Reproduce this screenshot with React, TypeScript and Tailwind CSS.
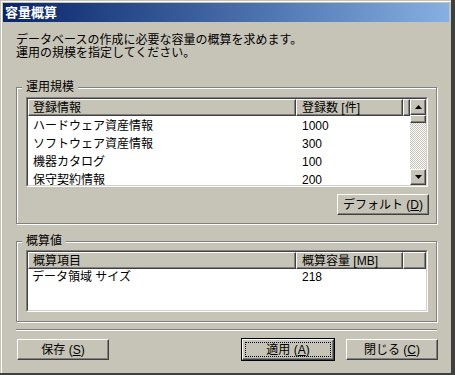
import React from "react";

const raised =
  "border border-t-white border-l-white border-r-[#404040] border-b-[#404040] shadow-[inset_-1px_-1px_0_#808080]";

function HeaderCell({ children, className }: { children?: React.ReactNode; className: string }) {
  return (
    <div className={`flex h-full shrink-0 items-center bg-[#c6c3b7] ${raised} ${className}`}>
      {children}
    </div>
  );
}

function Arrow({ up }: { up?: boolean }) {
  return (
    <svg width="7" height="4" viewBox="0 0 7 4">
      <polygon points={up ? "3.5,0 7,4 0,4" : "0,0 7,0 3.5,4"} fill="#000" />
    </svg>
  );
}

function Scrollbar() {
  return (
    <div className="flex w-[16px] shrink-0 flex-col">
      <div className={`flex h-[16px] items-center justify-center bg-[#c6c3b7] ${raised}`}>
        <Arrow up />
      </div>
      <div className={`h-[8px] bg-[#c6c3b7] ${raised}`} />
      <div className="flex-1 bg-[image:repeating-conic-gradient(#c6c3b7_0_25%,#ffffff_0_50%)] bg-[length:2px_2px]" />
      <div className={`flex h-[16px] items-center justify-center bg-[#c6c3b7] ${raised}`}>
        <Arrow />
      </div>
    </div>
  );
}

function Sunken({ children, className }: { children: React.ReactNode; className: string }) {
  return (
    <div className={`border border-t-[#808080] border-l-[#808080] border-r-white border-b-white ${className}`}>
      <div className="flex h-full border border-t-[#404040] border-l-[#404040] border-r-[#d4d0c8] border-b-[#d4d0c8] bg-white">
        {children}
      </div>
    </div>
  );
}

function GroupBox({ label, children, className }: { label: string; children: React.ReactNode; className: string }) {
  return (
    <div
      className={`relative border border-[#808080] shadow-[inset_1px_1px_0_#ffffff,1px_1px_0_#ffffff] ${className}`}
    >
      <span className="absolute -top-[8px] left-[5px] bg-[#c6c3b7] px-[4px] leading-[14px]">{label}</span>
      {children}
    </div>
  );
}

function Button({ label, k, def, className }: { label: string; k: string; def?: boolean; className: string }) {
  return (
    <div className={`h-[23px] border ${def ? "border-black" : "border-transparent"} ${className}`}>
      <div className={`h-full ${raised} p-[2px]`}>
        <div
          className={`flex h-full items-center justify-center border border-dotted ${
            def ? "border-black" : "border-transparent"
          } leading-[14px]`}
        >
          <span>
            {label} (<span className="underline underline-offset-[1px]">{k}</span>)
          </span>
        </div>
      </div>
    </div>
  );
}

const rows = [
  ["ハードウェア資産情報", "1000"],
  ["ソフトウェア資産情報", "300"],
  ["機器カタログ", "100"],
  ["保守契約情報", "200"],
];

export default function App() {
  return (
    <div className="flex h-[375px] w-[455px] flex-col border-r-[4px] border-b-[2px] border-r-[#404040] border-b-[#404040] bg-[#c6c3b7] pt-[3px] pr-[2px] pl-[3px] text-[12px] text-black shadow-[inset_1px_1px_0_#c6c3b7,inset_2px_2px_0_#ffffff] font-[family-name:'Liberation_Sans','Noto_Sans_CJK_JP',sans-serif]">
      {/* Title bar */}
      <div className="flex h-[19px] shrink-0 items-center bg-linear-to-r from-[#0a246a] to-[#86b0e2] pl-[2px]">
        <span className="text-[13px] font-bold leading-[19px] text-white">容量概算</span>
      </div>

      <div className="flex flex-1 flex-col pr-[12px] pl-[13px]">
        <p className="mt-[12px] leading-[13px]">
          データベースの作成に必要な容量の概算を求めます。
          <br />
          運用の規模を指定してください。
        </p>

        {/* 運用規模 */}
        <GroupBox label="運用規模" className="mt-[27px] h-[137px] pt-[9px] pr-[8px] pl-[9px]">
          <Sunken className="h-[90px]">
            <div className="flex flex-1 flex-col overflow-hidden">
              <div className="flex h-[17px] shrink-0">
                <HeaderCell className="w-[268px] pl-[4px] leading-[14px]">登録情報</HeaderCell>
                <HeaderCell className="w-[107px] pl-[5px] leading-[14px]">登録数 [件]</HeaderCell>
                <HeaderCell className="flex-1" />
              </div>
              <div className="pt-[1px]">
                {rows.map(([name, n]) => (
                  <div key={name} className="flex h-[18px] items-center leading-[14px]">
                    <span className="w-[268px] shrink-0 pl-[5px]">{name}</span>
                    <span className="pl-[6px]">{n}</span>
                  </div>
                ))}
              </div>
            </div>
            <Scrollbar />
          </Sunken>
          <div className="mt-[6px] flex justify-end">
            <Button label="デフォルト" k="D" className="-mr-[2px] w-[94px] h-[22px]" />
          </div>
        </GroupBox>

        {/* 概算値 */}
        <GroupBox label="概算値" className="mt-[17px] h-[81px] pt-[8px] pr-[8px] pl-[9px]">
          <Sunken className="h-[62px]">
            <div className="flex flex-1 flex-col overflow-hidden">
              <div className="flex h-[17px] shrink-0">
                <HeaderCell className="w-[268px] pl-[4px] leading-[14px]">概算項目</HeaderCell>
                <HeaderCell className="w-[107px] pl-[5px] leading-[14px]">概算容量 [MB]</HeaderCell>
                <HeaderCell className="flex-1" />
              </div>
              <div className="flex h-[15px] items-center leading-[14px]">
                <span className="w-[268px] shrink-0 pl-[4px]">データ領域 サイズ</span>
                <span className="pl-[6px]">218</span>
              </div>
            </div>
          </Sunken>
        </GroupBox>

        {/* Separator */}
        <div className="mt-[7px] h-[2px] border-t border-b border-t-[#808080] border-b-white" />

        {/* Buttons */}
        <div className="-mr-[2px] mt-[7px] flex">
          <Button label="保存" k="S" className="w-[94px]" />
          <div className="ml-auto flex gap-[10px]">
            <Button label="適用" k="A" def className="w-[94px]" />
            <Button label="閉じる" k="C" className="w-[94px]" />
          </div>
        </div>
      </div>
    </div>
  );
}
